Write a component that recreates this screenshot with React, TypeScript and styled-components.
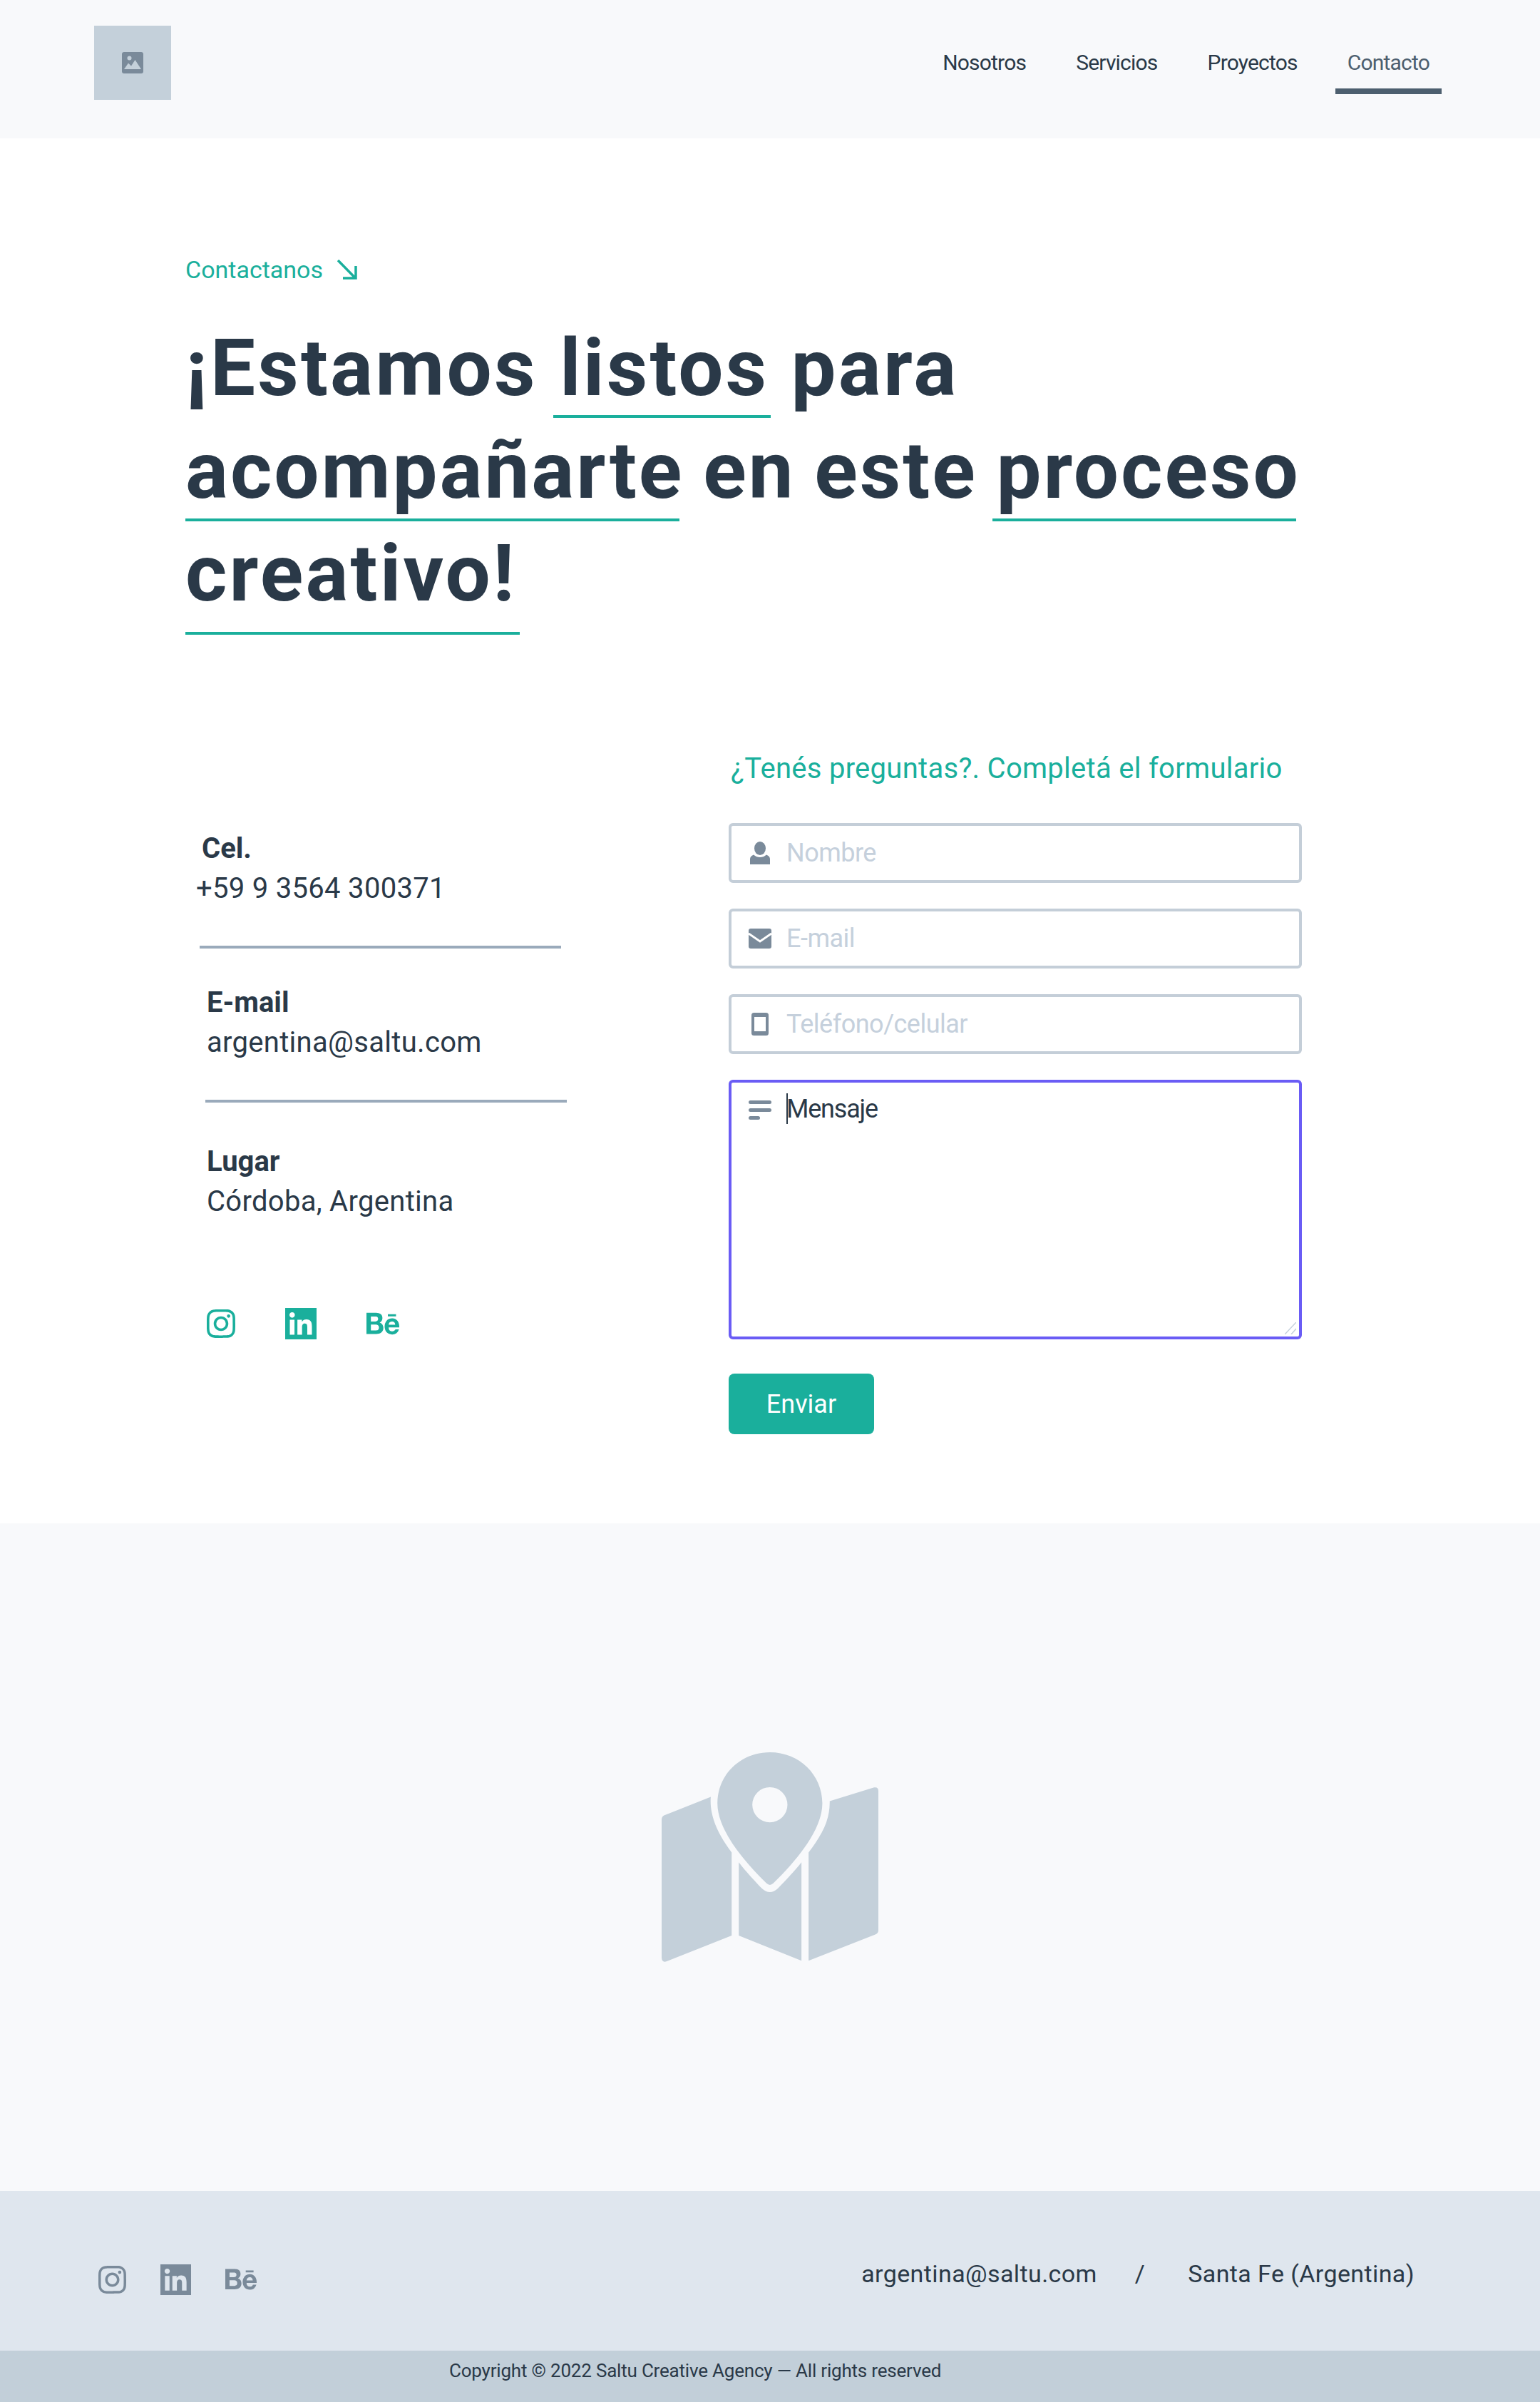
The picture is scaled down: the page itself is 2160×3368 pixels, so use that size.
import styled, { createGlobalStyle } from 'styled-components';
import { SiBehance, SiInstagram } from 'react-icons/si';

const GlobalStyle = createGlobalStyle`
	* {
		box-sizing: border-box;
	}

	body {
		margin: 0;
		background: #fff;
		color: #2a3948;
		font-family: Roboto, 'Liberation Sans', sans-serif;
	}
`;

const navLinks = ['Nosotros', 'Servicios', 'Proyectos', 'Contacto'];

function ImageIcon() {
	return (
		<svg width='30' height='30' viewBox='0 0 30 30'>
			<rect width='30' height='30' rx='3' fill='#7a8a9a' />
			<circle cx='10.5' cy='8.5' r='3' fill='#c4d0da' />
			<path d='M3 24 L9 15.5 L13 19.5 L18.500 11 L27 24 Z' fill='#c4d0da' />
		</svg>
	);
}

function ArrowIcon() {
	return (
		<svg width='28' height='28' viewBox='0 0 28 28' fill='none' stroke='#1aaf9c' strokeWidth='3.5'>
			<path d='M1 1 L25.500 26 M8 26 H26 V9' />
		</svg>
	);
}

function UserIcon() {
	return (
		<svg width='28' height='32' viewBox='0 0 28 32' fill='#7a8a9a'>
			<ellipse cx='14' cy='9.500' rx='8' ry='9.500' />
			<path d='M0 32 V24.500 Q0 20.500 5 18.500 Q9 22 14 22 Q19 22 23 18.500 Q28 20.500 28 24.500 V32 Z' />
		</svg>
	);
}

function MailIcon() {
	return (
		<svg width='32' height='28' viewBox='0 0 32 28'>
			<rect width='32' height='28' rx='3' fill='#7a8a9a' />
			<path d='M0 7 L16 18 L32 7' fill='none' stroke='#fff' strokeWidth='3' />
		</svg>
	);
}

function PhoneIcon() {
	return (
		<svg width='24' height='32' viewBox='0 0 24 32'>
			<rect width='24' height='32' rx='3.500' fill='#7a8a9a' />
			<rect x='4' y='6' width='16' height='20' fill='#fff' />
		</svg>
	);
}

function LinesIcon() {
	return (
		<svg width='32' height='27' viewBox='0 0 32 27' fill='#7a8a9a'>
			<rect width='32' height='5' rx='2.500' />
			<rect y='11' width='32' height='5' rx='2.500' />
			<rect y='22' width='16' height='5' rx='2.500' />
		</svg>
	);
}

function LinkedinIcon({ size }: { size: number }) {
	return (
		<svg width={size} height={size} viewBox='0 0 24 24' fill='currentColor'>
			<path
				fillRule='evenodd'
				d='M0 0h24v24H0z M20.447 20.452h-3.554v-5.569c0-1.328-.027-3.037-1.852-3.037-1.853 0-2.136 1.445-2.136 2.939v5.667H9.351V9h3.414v1.561h.046c.477-.9 1.637-1.85 3.37-1.85 3.601 0 4.267 2.37 4.267 5.455v6.286z M5.337 7.433c-1.144 0-2.063-.926-2.063-2.065 0-1.138.92-2.063 2.063-2.063 1.14 0 2.064.925 2.064 2.063 0 1.139-.925 2.065-2.064 2.065z M7.119 20.452H3.555V9h3.564v11.452z'
			/>
		</svg>
	);
}

function MapIcon() {
	return (
		<svg width='304' height='294' viewBox='140 110 913 883' fill='#c4d0da'>
			<path
				fillRule='evenodd'
				d='M596 110 C720 110 817 205 817 325 C817 430 720 555 610 662 Q596 675 582 662 C472 555 375 430 375 325 C375 205 472 110 596 110 Z M596 257 A74 74 0 1 0 596 405 A74 74 0 1 0 596 257 Z'
			/>
			<path d='M347 298 L150 376 Q140 382 140 394 L140 976 Q142 998 162 990 L435 882 L435 532 C385 465 340 385 347 298 Z' />
			<path d='M465 573 C495 612 535 655 562 683 Q596 715 630 683 C660 652 700 610 729 573 L729 988 L465 882 Z' />
			<path d='M848 316 L1035 258 Q1053 255 1053 272 L1053 860 Q1053 872 1040 877 L759 988 L759 532 C810 465 850 400 848 316 Z' />
		</svg>
	);
}

function App() {
	return (
		<>
			<GlobalStyle />
			<Header>
				<Logo>
					<ImageIcon />
				</Logo>
				<Nav>
					{navLinks.map((link) => (
						<NavLink key={link} $active={link === 'Contacto'}>
							{link}
						</NavLink>
					))}
				</Nav>
			</Header>

			<ContactSection>
				<Eyebrow>
					Contactanos
					<ArrowIcon />
				</Eyebrow>
				<Title>
					<TitleLine $track={3.25}>
						¡Estamos <Marked $left={-9} $right={-3} $drop={28}>listos</Marked> para
					</TitleLine>
					<TitleLine $track={3} $word={-4}>
						<Marked $left={0} $right={6} $drop={29}>acompañarte</Marked> en este{' '}
						<Marked $left={-6} $right={6} $drop={29}>proceso</Marked>
					</TitleLine>
					<TitleLine $track={3.2}>
						<Marked $left={0} $right={-4} $drop={44}>creativo!</Marked>
					</TitleLine>
				</Title>

				<Columns>
					<Details>
						<Label $indent={23}>Cel.</Label>
						<Value $indent={15}>+59 9 3564 300371</Value>
						<Divider $indent={20} />
						<Label $indent={30}>E-mail</Label>
						<Value $indent={30}>argentina@saltu.com</Value>
						<Divider $indent={28} />
						<Label $indent={30} $gap={59}>Lugar</Label>
						<Value $indent={30}>Córdoba, Argentina</Value>
						<Socials>
							<SiInstagram size={40} />
							<LinkedinIcon size={44} />
							<SiBehance size={46} />
						</Socials>
					</Details>

					<Form>
						<FormTitle>¿Tenés preguntas?. Completá el formulario</FormTitle>
						<Fields>
							<Field>
								<FieldIcon $left={30} $top={26}><UserIcon /></FieldIcon>
								<Input placeholder='Nombre' />
							</Field>
							<Field>
								<FieldIcon $left={28} $top={28}><MailIcon /></FieldIcon>
								<Input placeholder='E-mail' />
							</Field>
							<Field>
								<FieldIcon $left={32} $top={26}><PhoneIcon /></FieldIcon>
								<Input placeholder='Teléfono/celular' />
							</Field>
							<Field>
								<FieldIcon $left={28} $top={29}><LinesIcon /></FieldIcon>
								<Message placeholder='Mensaje' />
								<Caret />
								<Grip width='16' height='17' viewBox='0 0 16 17'>
									<path d='M0 17 L16 0 M9 17 L16 9' />
								</Grip>
							</Field>
						</Fields>
						<Submit type='button'>Enviar</Submit>
					</Form>
				</Columns>
			</ContactSection>

			<MapSection>
				<MapIcon />
			</MapSection>

			<Footer>
				<FooterSocials>
					<SiInstagram size={39} />
					<LinkedinIcon size={43} />
					<SiBehance size={44} />
				</FooterSocials>
				<FooterInfo>
					<span>argentina@saltu.com</span>
					<FooterSlash>/</FooterSlash>
					<span>Santa Fe (Argentina)</span>
				</FooterInfo>
			</Footer>
			<Copyright>Copyright © 2022 Saltu Creative Agency — All rights reserved</Copyright>
		</>
	);
}

const Header = styled.header`
	display: flex;
	justify-content: space-between;
	align-items: flex-start;
	height: 194px;
	padding: 36px 138px 0 132px;
	background: #f8f9fb;
`;

const Logo = styled.div`
	display: flex;
	justify-content: center;
	align-items: center;
	width: 108px;
	height: 104px;
	background: #c4d0da;
`;

const Nav = styled.nav`
	display: flex;
	gap: 36px;
`;

const NavLink = styled.a<{ $active?: boolean }>`
	padding: 32px 17px 16px;
	border-bottom: 8px solid ${(p) => (p.$active ? '#4d5f6f' : 'transparent')};
	color: ${(p) => (p.$active ? '#4d5f6f' : '#2a3948')};
	font-size: 30px;
	letter-spacing: -0.8px;
	line-height: 40px;
`;

const ContactSection = styled.section`
	height: 1942px;
	padding: 164px 0 0 260px;
`;

const Eyebrow = styled.div`
	display: flex;
	align-items: center;
	gap: 20px;
	height: 40px;
	color: #1aaf9c;
	font-size: 34px;
`;

const Title = styled.h1`
	margin: 46px 0 0;
	color: #2a3948;
	font-size: 112px;
	font-weight: 700;
	line-height: 144px;
`;

const TitleLine = styled.span<{ $track: number; $word?: number }>`
	display: block;
	letter-spacing: ${(p) => p.$track}px;
	word-spacing: ${(p) => p.$word ?? 0}px;
`;

const Marked = styled.span<{ $left: number; $right: number; $drop: number }>`
	position: relative;

	&::after {
		content: '';
		position: absolute;
		left: ${(p) => p.$left}px;
		right: ${(p) => p.$right}px;
		top: ${(p) => p.$drop + 104}px;
		height: 4px;
		background: #1aaf9c;
	}
`;

const Columns = styled.div`
	display: grid;
	grid-template-columns: 762px 804px;
	margin-top: 176px;
`;

const Details = styled.div`
	display: flex;
	flex-direction: column;
	align-items: flex-start;
	padding-top: 114px;
`;

const Label = styled.div<{ $indent: number; $gap?: number }>`
	margin: ${(p) => p.$gap ?? 52}px 0 0 ${(p) => p.$indent}px;
	font-size: 40px;
	font-weight: 700;
	line-height: 48px;

	&:first-child {
		margin-top: 0;
	}
`;

const Value = styled.div<{ $indent: number }>`
	margin: 8px 0 0 ${(p) => p.$indent}px;
	font-size: 40px;
	letter-spacing: 0.3px;
	line-height: 48px;
`;

const Divider = styled.hr<{ $indent: number }>`
	width: 507px;
	height: 4px;
	margin: 56px 0 0 ${(p) => p.$indent}px;
	border: none;
	background: #9aaabb;
`;

const Socials = styled.div`
	display: flex;
	align-items: center;
	gap: 70px;
	margin: 124px 0 0 30px;
	color: #1aaf9c;
`;

const Form = styled.form`
	display: flex;
	flex-direction: column;
	align-items: flex-start;
`;

const FormTitle = styled.h2`
	margin: 2px 0 52px 3px;
	color: #1aaf9c;
	font-size: 40px;
	font-weight: 400;
	letter-spacing: 0.28px;
	line-height: 48px;
`;

const Fields = styled.div`
	display: flex;
	flex-direction: column;
	gap: 36px;
	width: 100%;
`;

const Field = styled.div`
	position: relative;
	display: flex;
`;

const FieldIcon = styled.span<{ $left: number; $top: number }>`
	position: absolute;
	left: ${(p) => p.$left}px;
	top: ${(p) => p.$top}px;
	display: flex;
`;

const Input = styled.input`
	width: 100%;
	height: 84px;
	padding: 0 20px 0 77px;
	border: 4px solid #c4ced8;
	border-radius: 6px;
	outline: none;
	font-family: inherit;
	font-size: 36px;
	letter-spacing: -0.5px;

	&::placeholder {
		color: #c5d0dc;
		opacity: 1;
	}
`;

const Message = styled.textarea`
	display: block;
	width: 100%;
	height: 364px;
	padding: 15px 20px 0 77px;
	border: 4px solid #6a5cf5;
	border-radius: 6px;
	outline: none;
	resize: none;
	font-family: inherit;
	font-size: 36px;
	letter-spacing: -1.2px;
	line-height: 44px;

	&::placeholder {
		color: #2a3948;
		opacity: 1;
	}
`;

const Caret = styled.span`
	position: absolute;
	left: 81px;
	top: 19px;
	width: 2px;
	height: 43px;
	background: #2a3948;
`;

const Grip = styled.svg`
	position: absolute;
	right: 8px;
	bottom: 7px;
	fill: none;
	stroke: #c5d0dc;
	stroke-width: 1.5;
`;

const Submit = styled.button`
	width: 204px;
	height: 85px;
	margin-top: 48px;
	border: none;
	border-radius: 8px;
	background: #1aaf9c;
	color: #fff;
	font-family: inherit;
	font-size: 36px;
`;

const MapSection = styled.section`
	display: flex;
	justify-content: center;
	align-items: center;
	height: 936px;
	background: #f8f9fb;
`;

const Footer = styled.footer`
	display: flex;
	justify-content: space-between;
	align-items: flex-start;
	height: 224px;
	padding: 96px 176px 0 138px;
	background: #dfe6ee;
`;

const FooterSocials = styled.div`
	display: flex;
	align-items: center;
	gap: 48px;
	margin-top: 6px;
	color: #7a8a9a;
`;

const FooterInfo = styled.div`
	display: flex;
	gap: 53px;
	color: #2a3948;
	font-size: 34px;
	letter-spacing: 0.4px;
	line-height: 40px;
`;

const FooterSlash = styled.span`
	margin-right: 7px;
`;

const Copyright = styled.div`
	height: 72px;
	padding: 13px 0 0 630px;
	background: #c2cfd9;
	color: #2a3948;
	font-size: 26px;
	letter-spacing: -0.2px;
	line-height: 30px;
`;

export default App;
